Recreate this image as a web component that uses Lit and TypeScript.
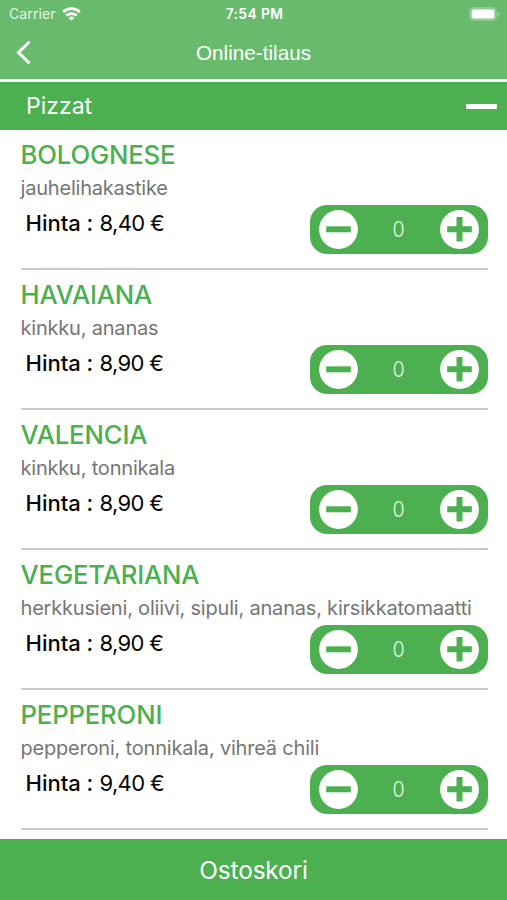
import { LitElement, html, css } from "lit";
import { customElement, property } from "lit/decorators.js";

interface Pizza {
  name: string;
  toppings: string;
  price: string;
}

const PIZZAS: Pizza[] = [
  { name: "BOLOGNESE", toppings: "jauhelihakastike", price: "8,40 €" },
  { name: "HAVAIANA", toppings: "kinkku, ananas", price: "8,90 €" },
  { name: "VALENCIA", toppings: "kinkku, tonnikala", price: "8,90 €" },
  { name: "VEGETARIANA", toppings: "herkkusieni, oliivi, sipuli, ananas, kirsikkatomaatti", price: "8,90 €" },
  { name: "PEPPERONI", toppings: "pepperoni, tonnikala, vihreä chili", price: "9,40 €" },
];

@customElement("quantity-stepper")
export class QuantityStepper extends LitElement {
  @property({ type: Number }) value = 0;

  static styles = css`
    :host {
      display: flex;
      align-items: center;
      justify-content: space-between;
      box-sizing: border-box;
      width: 177.5px;
      height: 49px;
      padding: 0 8.5px 0 8.5px;
      border-radius: 17px;
      background: #4caf50;
    }
    button {
      display: block;
      padding: 0;
      border: 0;
      background: none;
      height: 39px;
    }
    svg {
      display: block;
    }
    .count {
      font-size: 21px;
      font-weight: 320;
      transform: scaleX(0.94);
      color: #e4f4e4;
    }
  `;

  render() {
    return html`
      <button aria-label="Vähennä">
        <svg width="39" height="39" viewBox="0 0 39 39">
          <circle cx="19.5" cy="19.5" r="19.4" fill="#fff" />
          <path d="M7.2 16.3h24.6v6H7.2z" fill="#4caf50" />
        </svg>
      </button>
      <span class="count">${this.value}</span>
      <button aria-label="Lisää">
        <svg width="39" height="39" viewBox="0 0 39 39">
          <circle cx="19.5" cy="19.5" r="19.4" fill="#fff" />
          <path d="M7.2 16.3h9.3V7h6v9.3h9.3v6h-9.3v9.3h-6v-9.3H7.2z" fill="#4caf50" />
        </svg>
      </button>
    `;
  }
}

@customElement("pizza-row")
export class PizzaRow extends LitElement {
  @property({ attribute: false }) pizza!: Pizza;

  static styles = css`
    :host {
      display: block;
      box-sizing: border-box;
      height: 140px;
      padding: 9px 19.5px 0 20.5px;
    }
    .body {
      box-sizing: border-box;
      height: 131px;
      border-bottom: 2px solid #cbc9cb;
    }
    .name {
      font-size: 25.7px;
      line-height: 32px;
      font-weight: 460;
      letter-spacing: -0.16px;
      color: #4caf50;
    }
    .toppings {
      font-size: 20px;
      line-height: 24px;
      margin-top: 5px;
      letter-spacing: -0.2px;
      white-space: nowrap;
      color: #757575;
    }
    .order {
      display: flex;
      justify-content: space-between;
      margin-top: 5px;
    }
    .price {
      padding-left: 5px;
      font-size: 22px;
      line-height: 36px;
      color: #050505;
    }
    .label {
      font-weight: 490;
    }
    .amount {
      letter-spacing: -0.65px;
    }
  `;

  render() {
    const { name, toppings, price } = this.pizza;
    return html`
      <div class="body">
        <div class="name">${name}</div>
        <div class="toppings">${toppings}</div>
        <div class="order">
          <div class="price"><span class="label">Hinta :</span> <span class="amount">${price}</span></div>
          <quantity-stepper .value=${0}></quantity-stepper>
        </div>
      </div>
    `;
  }
}

@customElement("app-root")
export class AppRoot extends LitElement {
  static styles = css`
    :host {
      display: flex;
      flex-direction: column;
      height: 900px;
      overflow: hidden;
      background: #fff;
      font-family: Inter, "Liberation Sans", sans-serif;
    }
    .top {
      flex: none;
      height: 79px;
      background: #68bb6c;
      color: #fff;
    }
    .status {
      display: grid;
      grid-template-columns: 1fr auto 1fr;
      align-items: center;
      height: 27px;
      padding: 0 7px 0 9px;
    }
    .carrier {
      display: flex;
      align-items: center;
      gap: 6px;
      color: #e6f5e6;
      font-size: 14px;
      letter-spacing: 0.1px;
    }
    .time {
      font-size: 13.8px;
      font-weight: 600;
      letter-spacing: 0.4px;
    }
    .battery {
      justify-self: end;
    }
    svg {
      display: block;
    }
    .nav {
      display: grid;
      grid-template-columns: 60px 1fr 60px;
      align-items: center;
      height: 51px;
    }
    .back {
      padding: 0 0 0 15px;
      border: 0;
      background: none;
    }
    .title {
      text-align: center;
      font-family: "Liberation Sans", Arial, sans-serif;
      font-size: 20.6px;
      letter-spacing: 0.05px;
    }
    .section {
      flex: none;
      display: flex;
      align-items: center;
      justify-content: space-between;
      height: 48px;
      margin-top: 3px;
      padding: 0 10px 0 26px;
      background: #4caf50;
      color: #fff;
      font-size: 23px;
      font-weight: 440;
    }
    .collapse {
      width: 31px;
      height: 5px;
      border-radius: 1px;
      background: #fff;
    }
    .list {
      flex: 1;
      min-height: 0;
      overflow: hidden;
    }
    .cart {
      flex: none;
      height: 61px;
      border: 0;
      padding: 0;
      background: #4caf50;
      color: #fff;
      font-family: inherit;
      font-size: 24.5px;
      font-weight: 440;
      letter-spacing: -0.2px;
    }
  `;

  render() {
    return html`
      <header class="top">
        <div class="status">
          <div class="carrier">
            <span>Carrier</span>
            <svg width="19" height="14" viewBox="0 0 19 14" fill="none" stroke="#fff" stroke-width="2.8">
              <path d="M1.2 5a12 12 0 0 1 16.6 0" />
              <path d="M4.3 8.6a7.6 7.6 0 0 1 10.4 0" />
              <path d="M9.5 13.8l-2.9-3a4.2 4.2 0 0 1 5.8 0z" fill="#fff" stroke="none" />
            </svg>
          </div>
          <div class="time">7:54 PM</div>
          <svg class="battery" width="31" height="14" viewBox="0 0 31 14">
            <rect x="0.7" y="0.7" width="26.6" height="12.6" rx="4" fill="#8fcc92" stroke="#93ce96" stroke-width="1" />
            <rect x="2.7" y="2.5" width="22.6" height="9" rx="2" fill="#fff" />
            <path d="M28.5 4.8c2.4.8 2.4 3.6 0 4.4z" fill="#a0d4a2" />
          </svg>
        </div>
        <div class="nav">
          <button class="back" aria-label="Takaisin">
            <svg width="17" height="25" viewBox="0 0 17 25" fill="none" stroke="#fff" stroke-width="3">
              <path d="M14.5 1.7L3.5 12.5l11 10.8" />
            </svg>
          </button>
          <div class="title">Online-tilaus</div>
        </div>
      </header>
      <div class="section">
        <span>Pizzat</span>
        <span class="collapse"></span>
      </div>
      <main class="list">
        ${PIZZAS.map((p) => html`<pizza-row .pizza=${p}></pizza-row>`)}
      </main>
      <button class="cart">Ostoskori</button>
    `;
  }
}
